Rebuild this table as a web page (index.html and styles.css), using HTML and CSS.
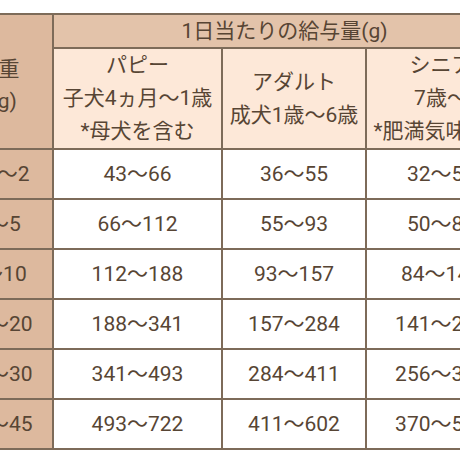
FILE: index.html
```html
<!DOCTYPE html>
<html lang="ja">
<head>
<meta charset="utf-8">
<link rel="stylesheet" href="styles.css">
</head>
<body>
<div class="table">
  <div class="cell weight-head"><span>体重</span><span>(kg)</span></div>
  <div class="cell top-head">1日当たりの給与量(g)</div>
  <div class="cell sub-head"><span>パピー</span><span>子犬4ヵ月～1歳</span><span>*母犬を含む</span></div>
  <div class="cell sub-head"><span>アダルト</span><span>成犬1歳～6歳</span></div>
  <div class="cell sub-head"><span>シニア</span><span>7歳～</span><span>*肥満気味の犬</span></div>

  <div class="cell weight">1.5～2</div><div class="cell">43～66</div><div class="cell">36～55</div><div class="cell">32～50</div>
  <div class="cell weight">2～5</div><div class="cell">66～112</div><div class="cell">55～93</div><div class="cell">50～84</div>
  <div class="cell weight">5～10</div><div class="cell">112～188</div><div class="cell">93～157</div><div class="cell">84～141</div>
  <div class="cell weight">10～20</div><div class="cell">188～341</div><div class="cell">157～284</div><div class="cell">141～256</div>
  <div class="cell weight">20～30</div><div class="cell">341～493</div><div class="cell">284～411</div><div class="cell">256～370</div>
  <div class="cell weight">30～45</div><div class="cell">493～722</div><div class="cell">411～602</div><div class="cell">370～541</div>
</div>
</body>
</html>
```
FILE: styles.css
```css
html, body {
  margin: 0;
  padding: 0;
  overflow: hidden;
  background: #ffffff;
}
body {
  width: 460px;
  height: 460px;
  font-family: Roboto, "Noto Sans CJK JP", sans-serif;
  color: #574534;
}
.table {
  margin-top: 13px;
  margin-left: -57px;
  width: 574px;
  display: grid;
  grid-template-columns: 107px 167px 142px 148px;
  grid-template-rows: 32px 99px repeat(6, 48px);
  gap: 2px;
  padding: 2px;
  background: #7d6b59;
  box-sizing: border-box;
}
.cell {
  background: #ffffff;
  font-size: 21px;
  display: flex;
  flex-direction: column;
  align-items: center;
  justify-content: center;
  white-space: nowrap;
  line-height: 33px;
}
.weight-head {
  grid-row: 1 / span 2;
  background: #ddb99e;
  line-height: 32px;
  padding-top: 7px;
}
.top-head {
  grid-column: 2 / span 3;
  background: #e3c3aa;
}
.sub-head {
  background: #fde8d8;
  line-height: 33px;
}
.weight {
  background: #ddb99e;
}
```
